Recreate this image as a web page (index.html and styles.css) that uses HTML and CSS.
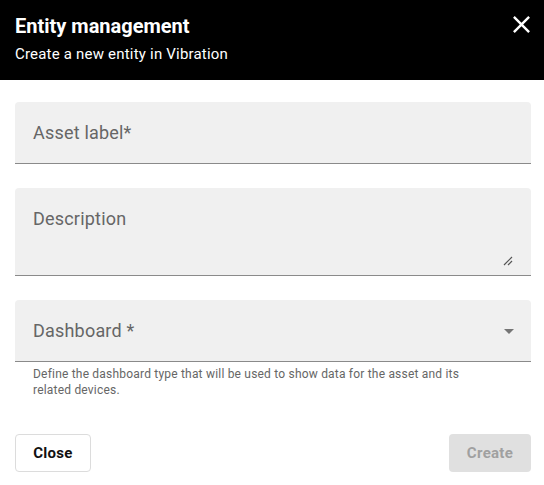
FILE: index.html
```html
<!DOCTYPE html>
<html>
<head>
<meta charset="utf-8">
<link rel="stylesheet" href="styles.css">
</head>
<body>
<div class="dialog">
  <header class="head">
    <div class="head-text">
      <h1 class="title">Entity management</h1>
      <p class="subtitle">Create a new entity in Vibration</p>
    </div>
    <button class="close-x" aria-label="Close">
      <svg viewBox="0 0 24 24" width="29" height="29"><path fill="#fff" d="M19 6.41L17.59 5 12 10.59 6.41 5 5 6.41 10.59 12 5 17.59 6.41 19 12 13.41 17.59 19 19 17.59 13.41 12z"/></svg>
    </button>
  </header>
  <main class="content">
    <div class="field field-input">
      <span class="label">Asset label*</span>
    </div>
    <div class="field field-area">
      <span class="label">Description</span>
      <svg class="resize" viewBox="0 0 10 10" width="10" height="10"><path d="M9 1L1 9M9 5L5 9" stroke="#555" stroke-width="1.2" fill="none"/></svg>
    </div>
    <div class="select-wrap">
      <div class="field field-select">
        <span class="label">Dashboard *</span>
        <span class="arrow"></span>
      </div>
      <p class="hint">Define the dashboard type that will be used to show data for the asset and its related devices.</p>
    </div>
  </main>
  <footer class="actions">
    <button class="btn btn-close">Close</button>
    <button class="btn btn-create" disabled>Create</button>
  </footer>
</div>
</body>
</html>
```
FILE: styles.css
```css
* { box-sizing: border-box; }
html, body { margin: 0; padding: 0; background: #fff; }
body { font-family: Roboto, "Noto Sans", Arial, sans-serif; color: #000; }
.dialog { width: 544px; height: 485px; display: flex; flex-direction: column; }
.head {
  background: #000; color: #fff; height: 80px;
  display: flex; justify-content: space-between; align-items: flex-start;
  padding: 14px 8px 0 15px;
}
.title { margin: 0; font-size: 20px; font-weight: 700; line-height: 24px; letter-spacing: 0; }
.subtitle { margin: 6px 0 0; font-size: 15px; line-height: 20px; font-weight: 400; letter-spacing: 0.2px; }
.close-x { background: none; border: 0; padding: 0; margin-top: -4px; width: 29px; height: 29px; cursor: pointer; }
.close-x svg { display: block; }
.content { padding: 22px 13px 0 15px; display: flex; flex-direction: column; gap: 24px; }
.field {
  background: #f0f0f0; border-bottom: 1px solid #8a8a8a;
  border-radius: 4px 4px 0 0; position: relative;
  padding: 20px 18px 0;
}
.field-input, .field-select { height: 62px; }
.field-area { height: 88px; }
.label { font-size: 18px; line-height: 22px; color: #666; letter-spacing: 0.2px; display: block; }
.resize { position: absolute; right: 18px; bottom: 9px; }
.arrow {
  position: absolute; right: 17px; top: 29px;
  width: 0; height: 0;
  border-left: 5px solid transparent; border-right: 5px solid transparent;
  border-top: 5px solid #757575;
}
.hint { margin: 4px 0 0; padding: 0 50px 0 18px; font-size: 12px; line-height: 16px; color: #666; letter-spacing: 0.2px; }
.actions { display: flex; justify-content: space-between; padding: 36px 13px 0 15px; }
.btn {
  font-family: Roboto, "Noto Sans", Arial, sans-serif;
  font-size: 15px; font-weight: 700; height: 38px; border-radius: 4px;
  letter-spacing: 0.3px;
}
.btn-close { width: 76px; background: #fff; border: 1px solid #dcdcdc; color: #111; }
.btn-create { width: 82px; background: #e0e0e0; border: 0; color: #a0a0a0; }
```
